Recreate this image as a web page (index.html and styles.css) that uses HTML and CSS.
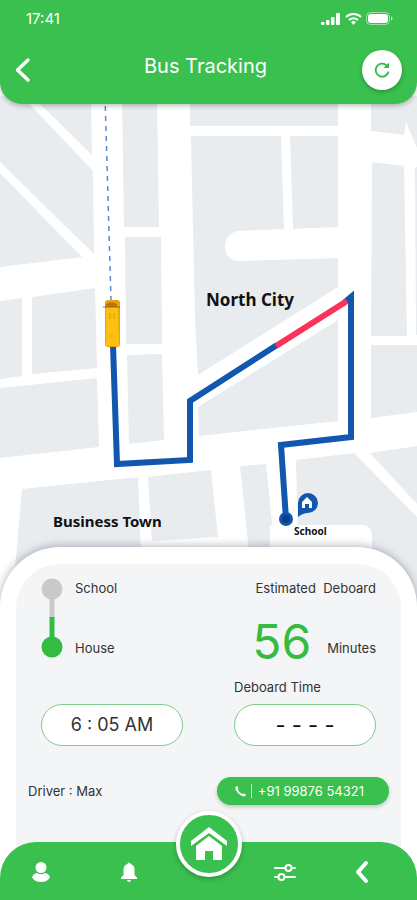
FILE: index.html
```
<!DOCTYPE html>
<html lang="en">
<head>
<meta charset="utf-8">
<meta name="viewport" content="width=device-width, initial-scale=1">
<title>Bus Tracking</title>
<link rel="stylesheet" href="styles.css">
</head>

<body>
<header class="header">
  <div class="status">
    <span>17:41</span>
    <svg width="72" height="16" viewBox="0 0 72 16" fill="#fff">
      <rect x="0" y="11" width="3.500" height="3" rx="1"/>
      <rect x="5" y="9" width="3.500" height="5" rx="1"/>
      <rect x="10" y="6" width="3.500" height="8" rx="1"/>
      <rect x="15" y="2" width="4" height="12" rx="1"/>
      <g fill="none" stroke="#fff" stroke-width="2">
        <path d="M25 6a11 11 0 0 1 15 0"/>
        <path d="M28 9a7 7 0 0 1 9 0"/>
      </g>
      <path d="M30 11a4 4 0 0 1 5 0l-2.500 3z"/>
      <rect x="45.500" y="1.500" width="23" height="12" rx="4" fill="none" stroke="#fff" stroke-opacity=".5"/>
      <rect x="47" y="3" width="20" height="9" rx="3"/>
      <path d="M70 5.500c2 .6 2 3.400 0 4z" fill-opacity=".7"/>
    </svg>
  </div>
  <div class="titlebar">
    <button type="button" class="back" aria-label="Back">
      <svg width="16" height="26" viewBox="0 0 16 26" fill="none" stroke="#fff" stroke-width="3.500" stroke-linecap="round" stroke-linejoin="round"><path d="M13 3L2.500 13 13 23"/></svg>
    </button>
    <h1>Bus Tracking</h1>
    <button type="button" class="refresh" aria-label="Refresh">
      <svg width="18" height="18" viewBox="0 0 18 18" fill="none" stroke="#34b94a" stroke-width="1.800"><path d="M15.500 10.500A6.500 6.500 0 1 1 13.600 4.400L15 6"/><path d="M16 1.500V7h-5.500z" fill="#34b94a" stroke="none"/></svg>
    </button>
  </div>
</header>

<main>
  <svg class="map" viewBox="0 96 417 524" role="img" aria-label="Bus route">
    <!-- city blocks, the gaps are the streets -->
    <g fill="#e8ecef">
      <path d="M32 96H91L92 155z"/>
      <path d="M0 96H22L93 171 94 254 0 162z"/>
      <path d="M0 173L82 257 0 267z"/>
      <path d="M0 301L22 298V376L0 379z"/>
      <path d="M32 297L95 288 97 368 32 374z"/>
      <path d="M0 388L97 378 99 447 0 458z"/>
      <path d="M122 96H157L159 227H124z"/>
      <path d="M125 237H161L162 344H126z"/>
      <path d="M127 355L162 354 164 440 129 444z"/>
      <path d="M190 96H338V126H190z"/>
      <path d="M191 136H281L284 230 338 227V287L198 375 195 320z"/>
      <path d="M290 136H338V228L293 229z"/>
      <path d="M338 320V421L199 436 198 407z"/>
      <path d="M371 96H417V148L406 122 404 135 371 131z"/>
      <path d="M372 162L404 166 407 336H371z"/>
      <path d="M415 167H417V335H416z"/>
      <path d="M371 345H417V412L371 418z"/>
      <path d="M370 453L417 446V504z"/>
      <path d="M296 460L354 453 417 517V620H300z"/>
      <path d="M240 466L266 464 278 580H252z"/>
      <path d="M148 477L211 470 218 537 152 541z"/>
      <path d="M22 489L138 477 142 580H14z"/>
    </g>
    <path d="M340 227L238 231Q225 234 225 247Q226 260 238 261L340 258z" fill="#fff"/>
    <path d="M270 525H362q10 0 10 12V620H270z" fill="#fff"/>

    <path d="M105 96L111 300" stroke="#5a87cc" stroke-width="1.500" stroke-dasharray="5 5" fill="none"/>
    <g fill="none" stroke-width="6">
      <path d="M113 345L117 464 190 460V401L277 345" stroke="#1157ae"/>
      <path d="M345 302L351 297V437L281 445 286 519" stroke="#1157ae"/>
      <path d="M276 346L347 301" stroke="#fb3259"/>
    </g>
    <circle cx="286" cy="519" r="7" fill="#1157ae"/>
    <circle cx="286" cy="519" r="4" fill="#0b3e85"/>

    <!-- bus -->
    <rect x="105" y="300" width="15" height="47" rx="3" fill="#eda20b"/>
    <path d="M106 307H118L119 346H106z" fill="#fdbf10"/>
    <path d="M106 304q6-4 11 0v3h-11z" fill="#b97809"/>
    <path d="M103 307H120" stroke="#8f6c1c"/>
    <path d="M110 313v6M114 313v6M110 336h3" stroke="#d9950c"/>

    <!-- school pin -->
    <path d="M298 517V503A10 10 0 1 1 308 513Q303 513 298 517z" fill="#1157ae"/>
    <path d="M302 502L307 497 312 502V508H309V504H305V508H302z" fill="#fff"/>

    <g class="places">
      <text x="206" y="306" class="place-lg">North City</text>
      <text x="53" y="527" class="place-md">Business Town</text>
      <text x="294" y="535" class="place-sm">School</text>
    </g>
  </svg>

  <section class="panel">
    <div class="card">
      <div class="trip">
        <div class="col">
          <div class="stops">
            <svg width="22" height="80" viewBox="0 0 22 80">
              <path d="M11 11V40" stroke="#c9c9c9" stroke-width="5"/>
              <path d="M11 39V69" stroke="#34bc42" stroke-width="5"/>
              <circle cx="11" cy="11" r="10.500" fill="#c9c9c9"/>
              <circle cx="11" cy="69" r="10.500" fill="#34bc42"/>
            </svg>
            <ul>
              <li>School</li>
              <li>House</li>
            </ul>
          </div>
          <div class="time">6 : 05 AM</div>
        </div>
        <div class="col">
          <p class="estimated">Estimated&nbsp; Deboard</p>
          <p class="minutes"><strong>56</strong> <span>Minutes</span></p>
          <p class="deboard">Deboard Time</p>
          <div class="time dashes">- - - -</div>
        </div>
      </div>
      <div class="driver">
        <span>Driver : Max</span>
        <a class="phone" href="tel:+919987654321">
          <svg width="11" height="11" viewBox="0 0 11 11" fill="none" stroke="#fff" stroke-linecap="round"><path d="M2 2Q2 8 9 9" stroke-width="1.600"/><path d="M1.800 1.500V3.500M7.500 9H9.500" stroke-width="2.600"/></svg>
          <span class="number">+91 99876 54321</span>
        </a>
      </div>
    </div>
  </section>
</main>

<nav class="tabs">
  <a href="#profile" aria-label="Profile">
    <svg width="20" height="22" viewBox="0 0 20 22" fill="#fff"><circle cx="10" cy="6.500" r="5.500"/><path d="M1 16.500Q2 12.500 6 12Q10 14.500 14 12Q18 12.500 19 16.500Q16 21 10 21T1 16.500z"/></svg>
  </a>
  <a href="#alerts" aria-label="Alerts">
    <svg width="18" height="20" viewBox="0 0 18 20" fill="#fff"><path d="M9 0.500q1.500 0 1.500 1.500Q14.500 3 14.500 8V13L17 15.500V17H1V15.500L3.500 13V8Q3.500 3 7.500 2 7.500.5 9 .5z"/><path d="M7 18h4q-.5 2-2 2t-2-2z"/></svg>
  </a>
  <a href="#home" class="home" aria-label="Home">
    <svg width="38" height="36" viewBox="0 0 38 36" fill="#fff"><path d="M19 1L37 15V20L19 7 1 20V15z"/><path d="M19 10L32 20V34H23V25H15V34H6V20z"/></svg>
  </a>
  <a href="#settings" aria-label="Settings">
    <svg width="22" height="18" viewBox="0 0 22 18" fill="none" stroke="#fff" stroke-width="2" stroke-linecap="round"><path d="M1 5H11M18 5H21M1 14H4M11 14H21"/><circle cx="14.500" cy="5" r="3"/><circle cx="7.500" cy="14" r="3"/></svg>
  </a>
  <a href="#back" aria-label="Previous">
    <svg width="16" height="24" viewBox="0 0 16 24" fill="none" stroke="#fff" stroke-width="4" stroke-linecap="round" stroke-linejoin="round"><path d="M12 3L4 12 12 21"/></svg>
  </a>
</nav>
</body>
</html>
```

FILE: styles.css
```
* {
  box-sizing: border-box;
}
body {
  background: #fff;
  color: #333;
  font: 13px/20px Inter, Roboto, sans-serif;
  margin: 0;
}
h1, p, ul {
  margin: 0;
  padding: 0;
}
svg {
  display: block;
}
button {
  background: none;
  border: 0;
  cursor: pointer;
  padding: 0;
}
a {
  color: #fff;
  text-decoration: none;
}

.header {
  background: #3ac04e;
  border-radius: 0 0 22px 22px;
  box-shadow: 0 2px 5px rgba(0, 0, 0, .25);
  color: #fff;
  padding: 9px 15px 14px;
  position: relative;
  z-index: 1;
}
.status {
  align-items: center;
  display: flex;
  font-size: 15px;
  justify-content: space-between;
  padding: 0 9px 0 11px;
}
.titlebar {
  align-items: center;
  display: flex;
  justify-content: space-between;
  margin-top: 21px;
}
.titlebar h1 {
  font-size: 20px;
  font-weight: 400;
  line-height: 24px;
  padding-bottom: 8px;
}
.back {
  width: 34px;
}
.refresh {
  background: #fff;
  border-radius: 50%;
  box-shadow: 0 2px 4px rgba(0, 0, 0, .25);
  display: grid;
  height: 40px;
  place-items: center;
  width: 40px;
}

.map {
  margin-top: -8px;
  width: 100%;
}
.places {
  fill: #111;
  font-family: "Noto Sans", "Open Sans", sans-serif;
  font-weight: 700;
}
.place-lg {
  font-size: 17px;
}
.place-md {
  font-size: 15px;
}
.place-sm {
  font-size: 10px;
}

.panel {
  background: #fff;
  border-radius: 60px 60px 0 0;
  box-shadow: 0 -1px 8px rgba(60, 70, 90, .4);
  margin-top: -73px;
  padding: 17px 16px 0;
  position: relative;
}
.card {
  background: #f3f5f7;
  border-radius: 44px 44px 0 0;
  padding: 14px 12px 95px;
}
.trip {
  display: flex;
  justify-content: space-between;
  padding: 0 13px;
}
.col {
  display: flex;
  flex-direction: column;
  justify-content: space-between;
}
.stops {
  display: flex;
  gap: 12px;
}
.stops ul {
  display: flex;
  flex-direction: column;
  justify-content: space-between;
  list-style: none;
}
.estimated {
  text-align: right;
}
.minutes {
  align-items: flex-end;
  display: flex;
  gap: 16px;
  justify-content: flex-end;
  margin-top: 22px;
}
.minutes strong {
  color: #34bc42;
  font-size: 48px;
  font-weight: 400;
  line-height: 44px;
}
.minutes span {
  padding-bottom: 6px;
}
.deboard {
  margin: 13px 0 7px;
}
.time {
  background: #fff;
  border: 1px solid #7fcb8a;
  border-radius: 21px;
  font-size: 18px;
  height: 42px;
  line-height: 40px;
  text-align: center;
  width: 142px;
}
.dashes {
  color: #111;
  font-size: 22px;
}
.driver {
  align-items: center;
  display: flex;
  justify-content: space-between;
  margin-top: 31px;
}
.phone {
  align-items: center;
  background: #3ac04e;
  border-radius: 14px;
  box-shadow: 0 2px 4px rgba(0, 0, 0, .2);
  display: flex;
  gap: 5px;
  height: 28px;
  padding: 0 25px 0 18px;
}
.number {
  border-left: 1px solid #c4ecca;
  line-height: 14px;
  padding-left: 6px;
}

.tabs {
  align-items: center;
  background: #3ac04e;
  border-radius: 36px 36px 0 0;
  display: grid;
  grid-template-columns: 82fr 94fr 66fr 86fr 68fr;
  height: 58px;
  justify-items: center;
  margin-top: -58px;
  padding: 2px 21px 0 0;
  position: relative;
}
.home {
  align-self: start;
  background: #3ac04e;
  border: 4px solid #fff;
  border-radius: 50%;
  box-shadow: 0 2px 5px rgba(0, 0, 0, .25);
  display: grid;
  height: 66px;
  margin-top: -33px;
  place-items: center;
  width: 66px;
}
```
